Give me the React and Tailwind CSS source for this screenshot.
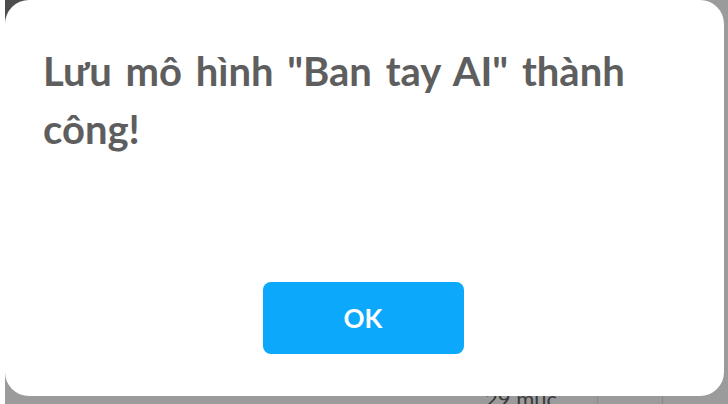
export default function App() {
  return (
    <div className="relative w-[728px] h-[404px] overflow-hidden bg-white pl-[5px]" style={{ fontFamily: 'Lato, "Open Sans", sans-serif' }}>
      {/* dimmed page under the modal */}
      <div className="h-full bg-[#9b9b9b] flex flex-col">
        <div className="w-[40px] h-[20px] bg-[#4d4d4d]" />
        <div className="mt-auto flex items-end h-[20px]">
          <div className="ml-[480px] text-[22px] leading-none text-[#3a3a3a] translate-y-[6px]">29 mục</div>
          <div className="ml-[40px] w-px h-[8px] bg-[#8a8a8a]" />
          <div className="ml-[64px] w-px h-[8px] bg-[#8a8a8a]" />
        </div>
      </div>
      {/* modal */}
      <div className="absolute left-[5px] top-0 w-[719px] h-[396px] rounded-[24px] bg-white flex flex-col">
        <div className="pl-[38px] pr-[40px] pt-[42px] text-[40px] leading-[58px] font-bold text-[#5e5e5e] [word-spacing:4px]">
          Lưu mô hình "Ban tay AI" thành công!
        </div>
        <div className="mt-auto mb-[42px] flex justify-center">
          <button className="w-[201px] h-[72px] rounded-[8px] bg-[#0ba8fb] text-white text-[26px] font-bold ml-[-3px]">
            OK
          </button>
        </div>
      </div>
    </div>
  );
}
